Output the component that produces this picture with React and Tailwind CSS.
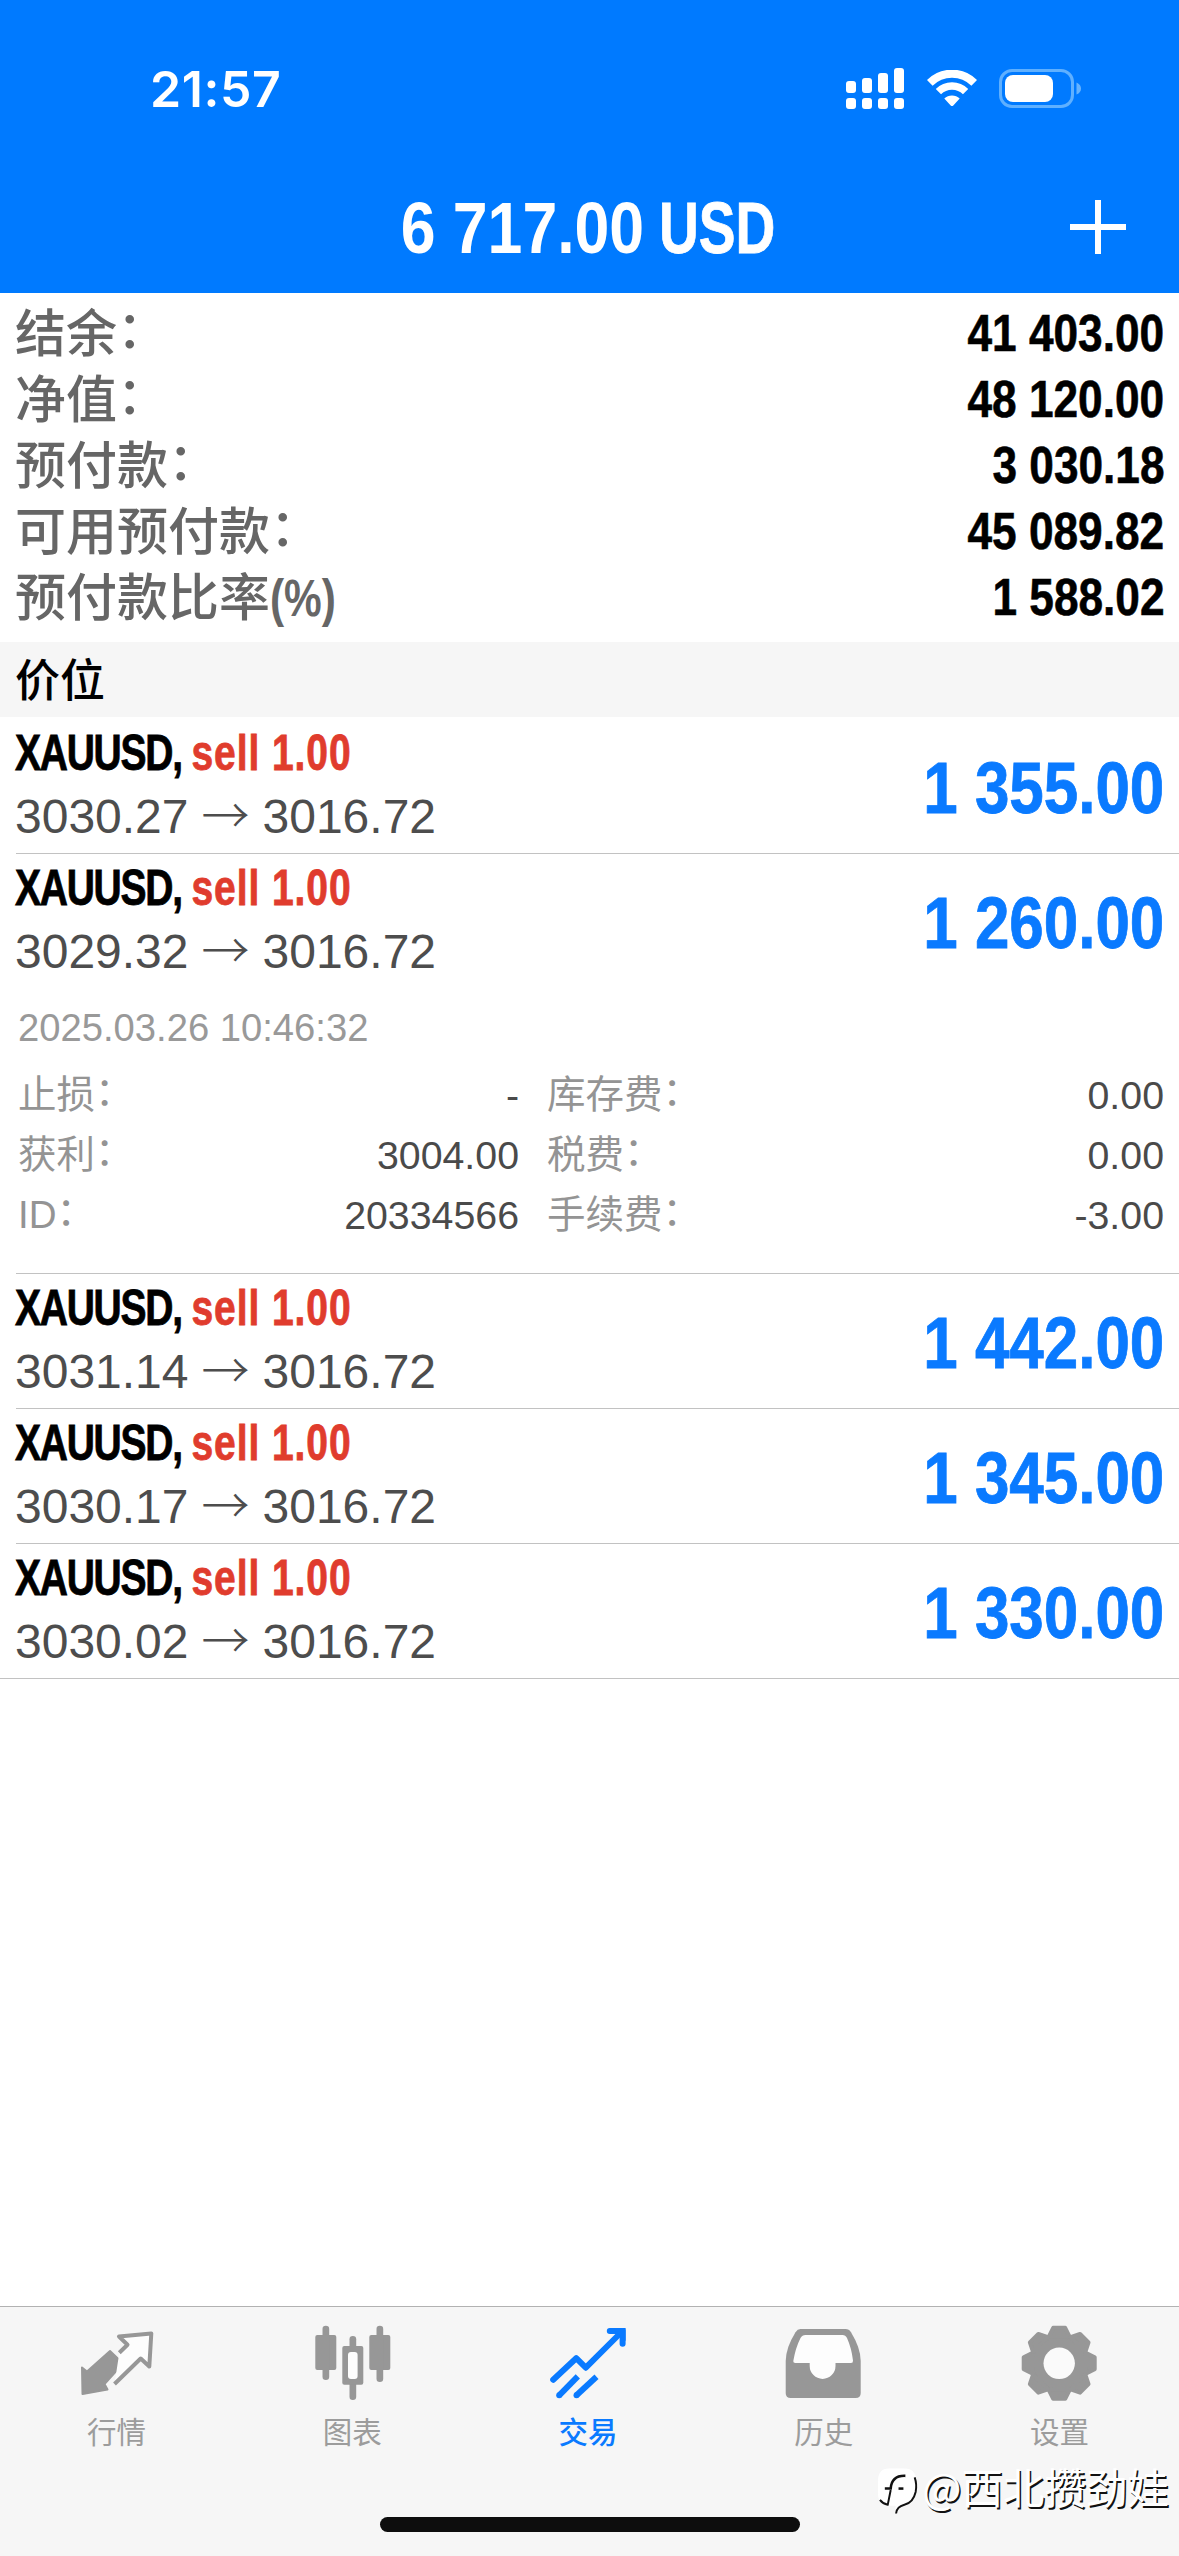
const account = [
  { label: '结余', value: '41 403.00' },
  { label: '净值', value: '48 120.00' },
  { label: '预付款', value: '3 030.18' },
  { label: '可用预付款', value: '45 089.82' },
  { label: '预付款比率', suffix: '(%)', value: '1 588.02' },
];

const positions = [
  { id: 1, open: '3030.27', current: '3016.72', profit: '1 355.00' },
  {
    id: 2,
    open: '3029.32',
    current: '3016.72',
    profit: '1 260.00',
    details: {
      time: '2025.03.26 10:46:32',
      rows: [
        ['止损', '-', '库存费', '0.00'],
        ['获利', '3004.00', '税费', '0.00'],
        ['ID', '20334566', '手续费', '-3.00'],
      ],
    },
  },
  { id: 3, open: '3031.14', current: '3016.72', profit: '1 442.00' },
  { id: 4, open: '3030.17', current: '3016.72', profit: '1 345.00' },
  { id: 5, open: '3030.02', current: '3016.72', profit: '1 330.00' },
];

const SignalIcon = () => (
  <svg width="58" height="41" viewBox="0 0 58 41" fill="#fff">
    <rect x="0" y="13" width="10" height="12" rx="3" />
    <rect x="16" y="10" width="10" height="15" rx="3" />
    <rect x="32" y="5" width="10" height="20" rx="3" />
    <rect x="48" y="0" width="10" height="25" rx="3" />
    <rect x="0" y="30" width="10" height="11" rx="3" />
    <rect x="16" y="30" width="10" height="11" rx="3" />
    <rect x="32" y="30" width="10" height="11" rx="3" />
    <rect x="48" y="30" width="10" height="11" rx="3" />
  </svg>
);

const WifiIcon = () => (
  <svg width="50" height="37" viewBox="0 0 50 37">
    <path d="M2.8 12.8 A31.5 31.5 0 0 1 47.2 12.8" fill="none" stroke="#fff" strokeWidth="8" />
    <path d="M11.4 21.6 A19.2 19.2 0 0 1 38.6 21.6" fill="none" stroke="#fff" strokeWidth="7.4" />
    <path d="M17.3 28.6 A11 11 0 0 1 32.7 28.6 L26.3 35.4 Q25 36.8 23.7 35.4 Z" fill="#fff" />
  </svg>
);

const BatteryIcon = () => (
  <svg width="82" height="39" viewBox="0 0 82 39">
    <rect x="1.5" y="1.5" width="72" height="36" rx="11.5" fill="none" stroke="#5fb0ff" strokeWidth="3" />
    <rect x="6" y="6" width="48" height="27" rx="8" fill="#fff" />
    <path d="M77.5 13.5 Q82 15.5 82 19.5 Q82 23.5 77.5 25.5 Z" fill="#66b3ff" />
  </svg>
);

const QuotesIcon = () => (
  <svg width="80" height="80" viewBox="0 0 80 80">
    <path
      d="M4 43.5 L9 47.5 L32 27 L45 39.5 L26.5 60 L29.5 65.5 L4.5 70 Z"
      fill="#979797"
      stroke="#979797"
      strokeWidth="2"
      strokeLinejoin="round"
    />
    <path
      d="M41.3 28.7 L49.5 20.7 L41 12.5 L73.3 9.5 L71.3 42.5 L62.7 34.5 L36.5 60"
      fill="#fdfdfd"
      stroke="#979797"
      strokeWidth="4"
      strokeLinejoin="round"
    />
  </svg>
);

const ChartIcon = () => (
  <svg width="80" height="80" viewBox="0 0 80 80" fill="#979797">
    <rect x="1.3" y="11" width="21" height="35" rx="2" />
    <rect x="8.5" y="1.7" width="6.7" height="54.3" rx="3.3" />
    <rect x="55.3" y="11" width="21" height="35" rx="2" />
    <rect x="62.5" y="1.7" width="6.7" height="56.3" rx="3.3" />
    <rect x="35.5" y="12" width="6.7" height="64" rx="3.3" />
    <rect x="28.3" y="22" width="21" height="38.7" rx="2" />
    <rect x="34" y="28" width="9.6" height="27" rx="3" fill="#fdfdfd" />
  </svg>
);

const TradeIcon = () => (
  <svg width="80" height="80" viewBox="0 0 80 80" fill="none" stroke="#0a7aff" strokeWidth="6">
    <path d="M4.2 55.7 L27.2 34.2 L36.8 43.7 L71 9.5" strokeLinecap="round" strokeLinejoin="round" />
    <path d="M60.8 7 H73.6 V19.8" strokeWidth="6" strokeLinecap="round" />
    <path d="M64 4 H74.5 Q76.6 4 76.6 6 V17 Z" fill="#0a7aff" stroke="none" />
    <path d="M10.2 71.3 L28.8 52.3" />
    <path d="M27.5 71.3 L47.5 52.7" />
    <circle cx="10.2" cy="71.3" r="3" fill="#0a7aff" stroke="none" />
    <circle cx="27.5" cy="71.3" r="3" fill="#0a7aff" stroke="none" />
  </svg>
);

const HistoryIcon = () => (
  <svg width="80" height="80" viewBox="0 0 80 80">
    <path
      d="M15.5 5 H60.5 Q64 5 66 8.2 Q75.7 24 75.7 37 V69 Q75.7 74 70.7 74 H5.7 Q0.7 74 0.7 69 V37 Q0.7 24 10.5 8.2 Q12.5 5 15.5 5 Z"
      fill="#979797"
    />
    <path
      d="M20.5 11 H57.5 Q60.5 11 62 14 Q66.5 24 68 36.5 Q68.2 39 66 39 H50.5 V42 A12.9 12.9 0 0 1 24.7 42 V39 H10.5 Q8 39 8.4 36.5 Q10.5 24 15.5 14 Q17.2 11 20.5 11 Z"
      fill="#fdfdfd"
    />
  </svg>
);

const SettingsIcon = () => (
  <svg width="80" height="80" viewBox="0 0 80 80">
    <g transform="translate(38.2 39.3)" fill="#979797" stroke="#979797" strokeWidth="4" strokeLinejoin="round">
      <circle r="27.5" />
      {[0, 45, 90, 135, 180, 225, 270, 315].map((angle) => (
        <path key={angle} d="M-10.5 -26.5 L-6 -35.5 H6 L10.5 -26.5 Z" transform={`rotate(${angle})`} />
      ))}
      <circle r="15.7" fill="#fafafa" stroke="none" />
    </g>
  </svg>
);

const tabs = [
  { label: '行情', Icon: QuotesIcon },
  { label: '图表', Icon: ChartIcon },
  { label: '交易', Icon: TradeIcon, active: true },
  { label: '历史', Icon: HistoryIcon },
  { label: '设置', Icon: SettingsIcon },
];

const Header = () => (
  <header className="h-[293px] bg-[#007aff] text-white">
    <div className="flex h-[176px] items-center justify-between pl-[150px] pr-[98px]">
      <span className="pt-[1px] font-['Inter',sans-serif] text-[50px] leading-[60px] font-semibold tracking-[0.6px]">
        21:57
      </span>
      <div className="flex items-center">
        <SignalIcon />
        <div className="ml-[23px]">
          <WifiIcon />
        </div>
        <div className="ml-[22px]">
          <BatteryIcon />
        </div>
      </div>
    </div>
    <div className="grid h-[103px] grid-cols-[1fr_auto_1fr] items-center">
      <span />
      <div className="flex gap-[15px] pr-[6px] text-[73px] leading-[103px] font-bold whitespace-nowrap">
        <span className="origin-right scale-x-[0.857]">6 717.00</span>
        <span className="origin-left scale-x-[0.755] [-webkit-text-stroke:0.8px]">USD</span>
      </div>
      <svg className="mr-[53px] mb-[2px] justify-self-end" width="56" height="54" viewBox="0 0 56 54">
        <path d="M0 27 H56 M28 0 V54" stroke="#fff" strokeWidth="6" />
      </svg>
    </div>
  </header>
);

const Summary = () => (
  <section className="pt-[7px] pr-[15px] pb-[12px] pl-[15px]">
    {account.map((row) => (
      <div key={row.label} className="flex h-[66px] items-start justify-between">
        <span className="text-[51px] leading-[69px] font-medium text-[#666]">
          {row.label}
          {row.suffix ? (
            <span className="inline-block origin-left scale-x-[0.83] font-bold">{row.suffix}</span>
          ) : (
            <span className="inline-block -translate-y-[4px]">：</span>
          )}
        </span>
        <span className="origin-right scale-x-[0.858] text-[51.5px] leading-[66px] font-bold text-black [-webkit-text-stroke:0.6px]">
          {row.value}
        </span>
      </div>
    ))}
  </section>
);

const DetailCell = ({ label, value }) => (
  <>
    <span className="text-[38.5px] text-[#949494]">
      {label}
      <span className="inline-block -translate-y-[3px]">：</span>
    </span>
    <span className="text-[39.3px] text-[#4a4a4a]">{value}</span>
  </>
);

const Details = ({ details }) => (
  <div className="pt-[10px] pb-[28px] pl-[2px] leading-[60px]">
    <div className="mb-[7px] text-[38.2px] text-[#999]">{details.time}</div>
    {details.rows.map(([label, value, label2, value2]) => (
      <div key={label} className="flex">
        <div className="flex w-[501px] justify-between">
          <DetailCell label={label} value={value} />
        </div>
        <div className="ml-[28px] flex flex-1 justify-between">
          <DetailCell label={label2} value={value2} />
        </div>
      </div>
    ))}
  </div>
);

const Position = ({ position }) => (
  <div className="ml-[16px] border-b border-[#c2c2c2] pr-[15px] last:ml-0 last:pl-[16px]">
    <div className="flex h-[134px] items-start justify-between">
      <div>
        <div className="-ml-[1px] origin-left scale-x-[0.78] text-[50px] leading-[68px] font-bold whitespace-pre [-webkit-text-stroke:0.8px]">
          <span className="tracking-[-1.6px] text-black">XAUUSD, </span>
          <span className="tracking-[1.2px] text-[#e03c2d]">sell 1.00</span>
        </div>
        <div className="-ml-[1px] flex gap-[13px] text-[48px] leading-[59px] text-[#4d4d4d]">
          <span>{position.open}</span>
          <span className="-mt-[4px] w-[48px] font-['Noto_Sans_CJK_SC',sans-serif] font-light">→</span>
          <span>{position.current}</span>
        </div>
      </div>
      <span className="origin-right scale-x-[0.86] text-[72px] leading-[138px] font-bold text-[#0a7aff] [-webkit-text-stroke:0.8px]">
        {position.profit}
      </span>
    </div>
    {position.details && <Details details={position.details} />}
  </div>
);

const TabBar = () => (
  <nav className="h-[250px] border-t border-[#b2b2b2] bg-[#f6f6f6]">
    <div className="grid grid-cols-5 pt-[17px]">
      {tabs.map(({ label, Icon, active }) => (
        <div key={label} className="flex flex-col items-center">
          <Icon />
          <span
            className={
              active
                ? "mt-[6px] mr-[3px] font-['Noto_Sans_CJK_SC',sans-serif] text-[29.5px] leading-[40px] font-medium text-[#0a7aff]"
                : "mt-[6px] mr-[3px] font-['Noto_Sans_CJK_SC',sans-serif] text-[29.5px] leading-[40px] text-[#9c9c9c]"
            }
          >
            {label}
          </span>
        </div>
      ))}
    </div>
    <div className="mx-auto mt-[67px] h-[15px] w-[420px] rounded-full bg-[#0d0d0d]" />
  </nav>
);

const Watermark = () => (
  <div className="absolute right-[10px] bottom-[39px] flex items-start">
    <svg className="mt-[1px]" width="45" height="50" viewBox="0 0 46 50" fill="none" stroke="#111" strokeWidth="2">
      <path
        d="M12 1 H28 Q40 1 40 14 V24 Q40 36 28 38 L19 47 L19 39 H12 Q1 38 1 26 V14 Q1 1 12 1 Z"
        fill="#fff"
        stroke="none"
      />
      <path d="M8 21.500 H14 Q15 8 29 8.500" strokeWidth="2.600" />
      <path d="M22 21.500 H27" strokeWidth="2.600" />
      <path d="M14 23 L11 38 Q6 37 3 33" />
      <path d="M38.500 10 Q41 17 39.500 25 Q37 36 28 38 Q20 40 19.500 47" />
    </svg>
    <span className="font-['Noto_Sans_CJK_SC',sans-serif] text-[41.5px] leading-[40px] text-white [text-shadow:1.5px_1.5px_0px_#111]">
      @西北攒劲娃
    </span>
  </div>
);

export default function App() {
  return (
    <div className="relative flex h-[2556px] w-[1179px] flex-col overflow-hidden bg-white font-['Liberation_Sans','Noto_Sans_CJK_SC',sans-serif]">
      <Header />
      <Summary />
      <h2 className="mb-[2px] h-[75px] bg-[#f6f6f6] pl-[15px] font-['Noto_Sans_CJK_SC',sans-serif] text-[45px] leading-[72px] font-medium text-black">
        价位
      </h2>
      <main className="flex-1">
        {positions.map((position) => (
          <Position key={position.id} position={position} />
        ))}
      </main>
      <TabBar />
      <Watermark />
    </div>
  );
}
